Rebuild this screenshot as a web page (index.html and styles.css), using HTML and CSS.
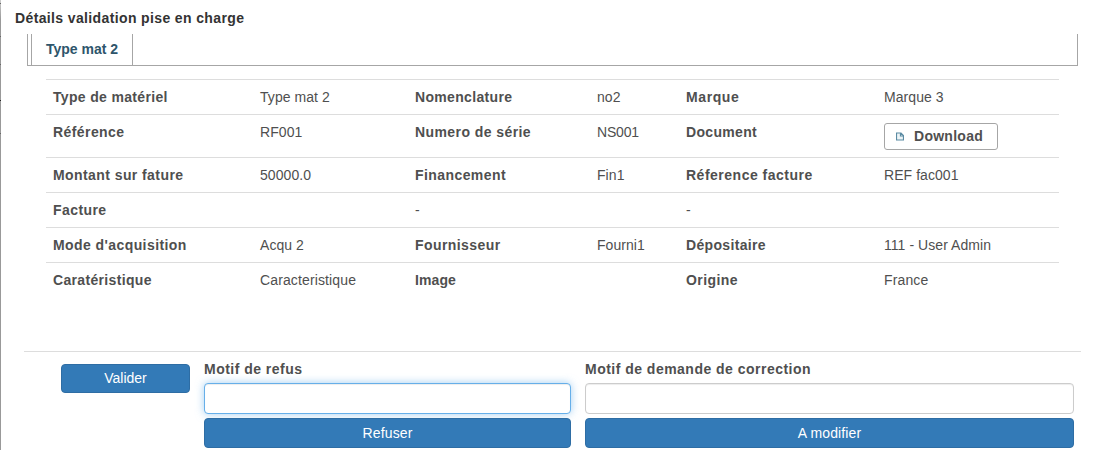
FILE: index.html
```html
<!DOCTYPE html>
<html lang="fr">
<head>
<meta charset="utf-8">
<title>Détails validation</title>
<link rel="stylesheet" href="styles.css">
</head>
<body>
<div class="page">
<div class="edge"><i></i><i></i><i></i><i></i><i></i></div>
<main class="dialog">
  <h1 class="title">Détails validation pise en charge</h1>
  <nav class="tabs"><a class="tab">Type mat 2</a></nav>
  <table class="details">
    <colgroup><col class="c1"><col class="c2"><col class="c3"><col class="c4"><col class="c5"><col class="c6"></colgroup>
    <tbody>
    <tr><th class="snug">Type de matériel</th><td>Type mat 2</td><th class="snug">Nomenclature</th><td>no2</td><th class="wide">Marque</th><td>Marque 3</td></tr>
    <tr class="tall"><th>Référence</th><td>RF001</td><th>Numero de série</th><td class="code">NS001</td><th class="snug">Document</th><td><button class="download"><svg class="file-icon" viewBox="0 0 8 9" width="8" height="9"><path d="M.5 1H5L7.5 3.5V8H.5Z M4.5 1V4H7.5" fill="#edf4f7" stroke="#5b8ba3" stroke-width="1.2"/></svg><span class="download-text">Download</span></button></td></tr>
    <tr><th>Montant sur fature</th><td>50000.0</td><th>Financement</th><td>Fin1</td><th class="ref">Réference facture</th><td>REF fac001</td></tr>
    <tr><th>Facture</th><td></td><td>-</td><td></td><td>-</td><td></td></tr>
    <tr><th>Mode d'acquisition</th><td>Acqu 2</td><th>Fournisseur</th><td>Fourni1</td><th class="snug">Dépositaire</th><td>111 - User Admin</td></tr>
    <tr><th class="snug">Caratéristique</th><td class="long">Caracteristique</td><th class="plain">Image</th><td></td><th>Origine</th><td class="long">France</td></tr>
    </tbody>
  </table>
  <section class="actions">
    <button class="btn validate">Valider</button>
    <div class="field">
      <label for="refus">Motif de refus</label>
      <input id="refus" class="input focused" type="text">
      <button class="btn refuse">Refuser</button>
    </div>
    <div class="field">
      <label for="correction">Motif de demande de correction</label>
      <input id="correction" class="input" type="text">
      <button class="btn refuse">A modifier</button>
    </div>
  </section>
</main>
</div>
</body>
</html>
```
FILE: styles.css
```css
* { box-sizing: border-box; }
body {
  margin: 0;
  height: 450px;
  overflow: hidden;
  background: #fff;
  color: #4f4f4f;
  font: 14px/20px "Liberation Sans", Arial, sans-serif;
}
.page { display: flex; height: 450px; }
/* Sliver of the dimmed page behind the dialog */
.edge {
  flex: 0 0 1px;
  height: 450px;
  padding-top: 3px;
  background: linear-gradient(#ccc, #999 20px);
}
.edge i { display: block; height: 1px; margin-bottom: 32px; background: #666; }
.edge i:nth-child(2) { margin-bottom: 27px; }
.edge i:nth-child(3) { margin-bottom: 35px; }
.edge i:nth-child(4) { background: #222; }
.dialog { flex: 1; min-width: 0; }
.title {
  margin: 0;
  padding: 8px 0 6px 14px;
  font-size: 14px;
  line-height: 20px;
  color: #333;
  letter-spacing: .37px;
}
.tabs {
  display: flex;
  width: 1051px;
  height: 32px;
  margin-left: 26px;
  padding-left: 3px;
  border: solid #a6a6a6;
  border-width: 0 1px 1px;
}
.tab {
  width: 102px;
  padding: 5px 0 0 14px;
  border: solid #a6a6a6;
  border-width: 0 1px;
  color: #2e556b;
  font-weight: bold;
}
.details {
  width: 1013px;
  margin: 13px 0 0 45px;
  table-layout: fixed;
  border-collapse: separate;
  border-spacing: 0;
}
.c1 { width: 207px; }
.c2 { width: 155px; }
.c3 { width: 182px; }
.c4 { width: 89px; }
.c5 { width: 198px; }
.c6 { width: 182px; }
.details th, .details td {
  height: 35px;
  padding: 7px 0 7px 7px;
  border-top: 1px solid #ddd;
  text-align: left;
  vertical-align: top;
  white-space: nowrap;
}
.details th { letter-spacing: .42px; }
.details .snug { letter-spacing: .33px; }
.details .wide { letter-spacing: .6px; }
.details .ref { letter-spacing: .5px; }
.details .plain { letter-spacing: .1px; }
.details td { letter-spacing: .06px; }
.details .long { letter-spacing: .13px; }
.details .code { letter-spacing: -.2px; }
.details .tall th, .details .tall td { height: 43px; }
.details .tall td:last-child { padding: 8px 0 7px 7px; }
.download {
  display: flex;
  align-items: center;
  gap: 10px;
  width: 114px;
  height: 27px;
  padding: 0 0 0 11px;
  border: 1px solid #a6a6a6;
  border-radius: 3px;
  background: #fff;
  color: #4f4f4f;
  font: bold 14px/20px "Liberation Sans", Arial, sans-serif;
  letter-spacing: .27px;
}
.download-text { padding-bottom: 2px; }
.file-icon { display: block; }
.actions {
  display: grid;
  grid-template-columns: 129px 367px 489px;
  column-gap: 14px;
  align-items: start;
  width: 1057px;
  margin: 54px 0 0 23px;
  padding: 7px 0 0 37px;
  border-top: 1px solid #ddd;
}
.field { display: grid; }
.field label { height: 24px; font-weight: bold; letter-spacing: .48px; }
.input {
  width: 100%;
  height: 31px;
  margin: 0 0 4px;
  border: 1px solid #ccc;
  border-radius: 4px;
  box-shadow: inset 0 1px 1px rgba(0, 0, 0, .075);
  outline: 0;
}
.focused {
  border-color: #66afe9;
  box-shadow: inset 0 1px 1px rgba(0, 0, 0, .075), 0 0 8px rgba(102, 175, 233, .6);
}
.btn {
  height: 30px;
  padding: 0;
  border: 1px solid #2e6da4;
  border-radius: 4px;
  background: #337ab7;
  color: #fff;
  font: 14px/20px "Liberation Sans", Arial, sans-serif;
}
.refuse { letter-spacing: .15px; }
.validate { height: 29px; margin-top: 5px; padding-bottom: 2px; }
```
